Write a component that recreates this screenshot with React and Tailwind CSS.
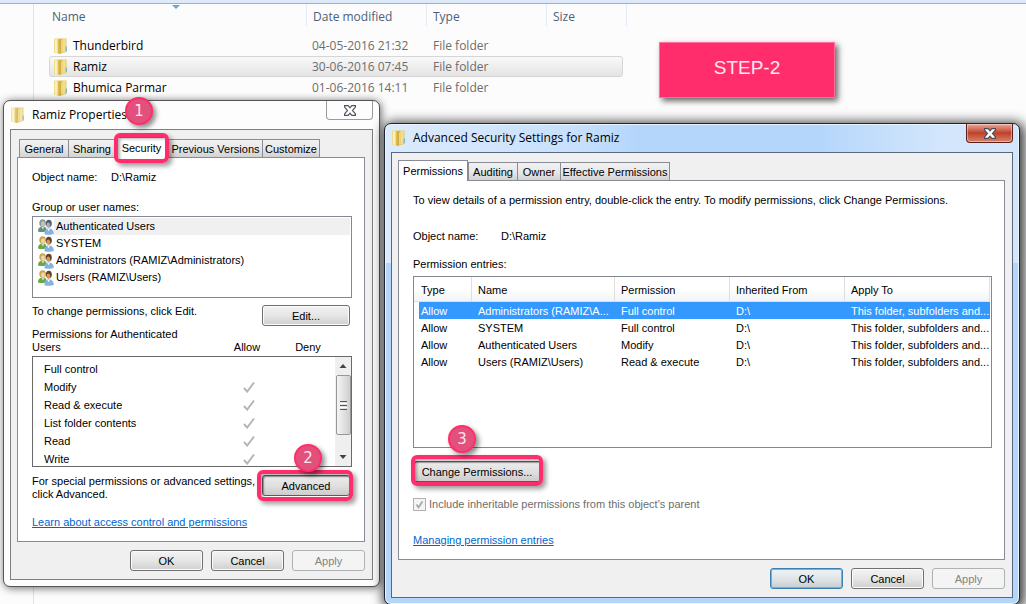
import { useState } from "react";

const GLASS_TEXT = "font-['Open_Sans','Noto_Sans',sans-serif]";

function Folder({ faded = false }) {
  return (
    <svg viewBox="0 0 16 18" className={faded ? "h-[18px] w-4 shrink-0 opacity-80" : "h-[18px] w-4 shrink-0"} aria-hidden="true">
      <path d="M7 1.500h6.500V15L8 16.500z" fill="#e2c65f" />
      <path d="M9.500 2h3.200v12.600l-3.200 1z" fill="#f1de8e" />
      <path d="M1 1.800 7 1v16l-6-1.200z" fill="#f2dd8c" />
      <path d="M2 2.600l2-.3v13.800l-2-.5z" fill="#faf0bd" />
      <path d="M5 2h2.500v15L5 16.400z" fill="#dcbd52" />
      <path d="M6.600 3l2.200-.8v13.600L6.600 17z" fill="#c9a33a" />
      <path d="M7.800 3.500l1.400-.5v12.500l-1.400.6z" fill="#eed77c" />
      <path d="M12.700 9.500h1v4.600l-1 .5z" fill="#5aa9cf" />
    </svg>
  );
}

function People({ muted = false }) {
  const hair = muted ? "#8d9a90" : "#c9a552";
  const face = muted ? "#c9c4bb" : "#f2d3a4";
  const body = muted ? "#5f9377" : "#6aa845";
  return (
    <svg viewBox="0 0 16 16" className="h-4 w-4 shrink-0" aria-hidden="true">
      <path d="M0 12.500C0 9 2 7.600 4.600 7.600S8.800 9 8.800 12c-2 1.400-6.600 1.400-8.800.5z" fill={body} />
      <ellipse cx="4.600" cy="4" rx="3.300" ry="3.800" fill={hair} />
      <ellipse cx="5" cy="5" rx="2" ry="2.700" fill={face} />
      <path d="M3.500 8.300l1.500 2 1.200-2z" fill="#eef4e8" />
      <ellipse cx="10.800" cy="4.600" rx="3" ry="3.800" fill={muted ? "#4f5f70" : "#5b4228"} />
      <ellipse cx="10.300" cy="6.200" rx="1.900" ry="2.700" fill={muted ? "#a9acb0" : "#d49a5d"} />
      <path d="M6.500 15.200c-.2-4 1.600-6 4.300-6s5 2.200 5.100 5.600c-2.600 1.300-6.600 1.400-9.400.4z" fill="#86b1e2" />
      <path d="M9 9.500l1.600 2.700 1.600-2.700z" fill="#f3f8ff" />
    </svg>
  );
}

function CloseGlyph({ fill, stroke }) {
  return (
    <svg viewBox="0 0 12 11" className="h-[11px] w-3" aria-hidden="true">
      <path d="M.6.600h3.600L6 2.900 7.800.6h3.600v1.500L8.500 5.500l2.900 3.400v1.500H7.800L6 8.100l-1.800 2.300H.6V8.900l2.900-3.400L.6 2.100z" fill={fill} stroke={stroke} strokeWidth="1.200" />
    </svg>
  );
}

function Check() {
  return (
    <svg viewBox="0 0 12 12" className="h-3 w-3" role="img" aria-label="Allowed">
      <path d="M1 7l3.200 3.600L11 1.500" fill="none" stroke="#b4b4b4" strokeWidth="1.900" />
    </svg>
  );
}

function Button({ children, size = "w-[73px]", kind = "normal", ...rest }) {
  const looks = {
    normal: "border-[#707070] bg-linear-to-b from-[#f3f3f3] via-[#e6e6e6] to-[#cfcfcf] text-black shadow-[inset_0_0_0_1px_#fbfbfb]",
    primary: "border-[#3c7fb1] bg-linear-to-b from-[#eef3f5] via-[#e0e6e8] to-[#c6ced2] text-black shadow-[inset_0_0_0_1px_#48c4f0]",
    pressed: "border-[#5c5c5c] bg-linear-to-b from-[#ececec] via-[#e0e0e0] to-[#cccccc] text-black shadow-[inset_1px_1px_1px_#a0a0a0]",
    disabled: "border-[#adb2b5] bg-[#f4f4f4] text-[#838383]",
  };
  return (
    <button type="button" disabled={kind === "disabled"} className={`${size} ${looks[kind]} h-[21px] shrink-0 rounded-[3px] border text-center leading-[18px]`} {...rest}>
      {children}
    </button>
  );
}

function Badge({ children, place }) {
  return (
    <span className={`${place} absolute z-20 flex size-7 items-center justify-center rounded-full border-2 border-[#ff2d6b] bg-[#e2507c] font-['DejaVu_Sans',sans-serif] text-[15px] text-[#ffe3ec] shadow-[3px_3px_5px_rgba(0,0,0,.45)]`}>
      {children}
    </span>
  );
}

function Highlight({ place }) {
  return <span aria-hidden="true" className={`${place} pointer-events-none absolute z-10 rounded-md border-4 border-[#ff2d6b] shadow-[3px_3px_5px_rgba(0,0,0,.4),inset_2px_2px_3px_rgba(0,0,0,.3)]`} />;
}

function Tab({ children, size }) {
  return (
    <button type="button" role="tab" aria-selected="false" className={`${size} h-[18px] border border-r-0 border-b-0 border-[#898c95] bg-linear-to-b from-[#f2f2f2] via-[#e8e8e8] to-[#d2d2d2] text-center leading-[18px] whitespace-nowrap last:border-r`}>
      {children}
    </button>
  );
}

const FILES = [
  ["Thunderbird", "04-05-2016 21:32"],
  ["Ramiz", "30-06-2016 07:45"],
  ["Bhumica Parmar", "01-06-2016 14:11"],
];

function Explorer() {
  return (
    <main className={`${GLASS_TEXT} flex min-h-screen flex-col bg-[#fcfcfc] text-xs`}>
      <div className="h-1 border-b border-[#a0afc8] bg-[#dce9f8]" />
      <div className="flex flex-1">
        <div className="w-[34px] shrink-0 border-r border-[#d9e5f3]" />
        <div className="pl-[15px]">
          <table className="w-[578px] table-fixed border-separate border-spacing-0 text-left">
            <colgroup>
              <col className="w-[258px]" />
              <col className="w-[120px]" />
              <col className="w-[120px]" />
              <col className="w-[80px]" />
            </colgroup>
            <thead className="text-[#4c607a]">
              <tr className="h-[21px] leading-[18px]">
                <th scope="col" className="relative border-r border-[#e3ecf6] pt-1 pl-[3px] font-normal">
                  Name
                  <svg viewBox="0 0 8 4" className="absolute top-px left-[123px] h-1 w-2" aria-hidden="true">
                    <path d="M0 0h8L4 4z" fill="#6ba9cb" />
                  </svg>
                </th>
                <th scope="col" className="border-r border-[#e3ecf6] pt-1 pl-[6px] font-normal">Date modified</th>
                <th scope="col" className="border-r border-[#e3ecf6] pt-1 pl-[6px] font-normal">Type</th>
                <th scope="col" className="border-r border-[#e3ecf6] pt-1 pl-[6px] font-normal">Size</th>
              </tr>
            </thead>
          </table>
          <ul className="mt-[9px]">
            {FILES.map(([name, date]) => (
              <li
                key={name}
                className={
                  name === "Ramiz"
                    ? "flex h-[21px] w-[574px] items-center rounded-[3px] border border-[#d6d6d6] bg-linear-to-b from-[#f9f9f9] to-[#e4e4e4]"
                    : "flex h-[21px] w-[574px] items-center border border-transparent"
                }
              >
                <span className="flex w-[262px] items-center gap-[4px] pl-[3px]"><Folder />{name}</span>
                <span className="w-[121px] text-[#6d6d6d]">{date}</span>
                <span className="text-[#6d6d6d]">File folder</span>
              </li>
            ))}
          </ul>
        </div>
      </div>
    </main>
  );
}

const USERS = ["Authenticated Users", "SYSTEM", "Administrators (RAMIZ\\Administrators)", "Users (RAMIZ\\Users)"];
const RIGHTS = ["Full control", "Modify", "Read & execute", "List folder contents", "Read", "Write"];

function PropertiesWindow() {
  return (
    <section aria-label="Ramiz Properties" className="absolute top-[100px] left-[3px] w-[377px] rounded-[7px] border border-[#555] bg-[#fdfdfd] px-1.5 pb-1.5 shadow-[1px_1px_8px_rgba(0,0,0,.6)]">
      <header className={`${GLASS_TEXT} flex h-7 items-start justify-between text-xs`}>
        <h2 className="flex h-7 items-center gap-[6px]"><Folder faded />Ramiz Properties</h2>
        <button type="button" aria-label="Close" className="flex h-[19px] w-[47px] items-center justify-center rounded-b-[4px] border border-t-0 border-[#9b9b9b]">
          <CloseGlyph fill="#fff" stroke="#4f5566" />
        </button>
      </header>
      <Badge place="top-[-4px] left-[121px]">1</Badge>
      <div className="border border-[#7f7f7f] bg-[#f0f0f0] pt-[9px] pr-[7px] pb-2 pl-1.5">
        <div role="tablist" className="flex h-[18px] pl-0.5">
          <Tab size="w-[49px]">General</Tab>
          <Tab size="w-[47px]">Sharing</Tab>
          <div className="relative w-[53px]">
            <button type="button" role="tab" aria-selected="true" className="absolute -top-0.5 h-[21px] w-full border border-b-0 border-[#898c95] bg-white leading-[18px]">Security</button>
            <Highlight place="-top-1.5 -left-px h-[30px] w-[55px]" />
          </div>
          <Tab size="w-[94px]">Previous Versions</Tab>
          <Tab size="w-[58px]">Customize</Tab>
        </div>
        <div className="border border-[#898c95] bg-white px-[14px] pt-3 pb-3 pr-3">
          <p className="flex"><span className="w-[79px]">Object name:</span><span>D:\Ramiz</span></p>
          <p className="mt-4">Group or user names:</p>
          <ul className="mt-0.5 h-[82px] border border-[#828790] pt-px pr-px pl-[5px]">
            {USERS.map((user, i) => (
              <li key={user} className="flex h-[17px] items-center">
                <People muted={i === 0} />
                <span className={i === 0 ? "flex-1 bg-[#f0f0f0] pl-0.5 leading-[17px]" : "flex-1 pl-0.5 leading-[17px]"}>{user}</span>
              </li>
            ))}
          </ul>
          <div className="mt-[7px] flex items-start justify-between pr-0.5 leading-[13px]">
            <p>To change permissions, click Edit.</p>
            <Button size="w-[88px]">Edit...</Button>
          </div>
          <div className="mt-0.5 flex items-end leading-[13px]">
            <p className="w-[186px] pr-8">Permissions for Authenticated Users</p>
            <span className="w-[58px] text-center">Allow</span>
            <span className="w-16 text-center">Deny</span>
          </div>
          <div className="mt-0.5 flex h-[111px] overflow-hidden border border-[#696969]">
            <ul className="flex-1 pt-[3px] pl-[11px]">
              {RIGHTS.map((right, i) => (
                <li key={right} className="flex h-[18px] items-center">
                  <span className="w-[199px]">{right}</span>
                  {i > 0 && <Check />}
                </li>
              ))}
            </ul>
            <div className="flex w-4 flex-col items-center bg-[#efefef]">
              <svg viewBox="0 0 16 18" className="h-[18px] w-4" aria-hidden="true"><path d="M4.500 11h7L8 7z" fill="#444" /></svg>
              <div className="flex h-[60px] w-[15px] flex-col items-center justify-center gap-px rounded-[2px] border border-[#979797] bg-linear-to-r from-[#f5f5f5] to-[#cfcfcf]">
                <span className="h-px w-[7px] bg-[#555]" />
                <span className="h-px w-[7px] bg-white" />
                <span className="h-px w-[7px] bg-[#555]" />
                <span className="h-px w-[7px] bg-white" />
                <span className="h-px w-[7px] bg-[#555]" />
              </div>
              <svg viewBox="0 0 16 18" className="mt-auto h-[18px] w-4" aria-hidden="true"><path d="M4.500 7h7L8 11z" fill="#444" /></svg>
            </div>
          </div>
          <div className="mt-2 flex items-start justify-between pr-0.5 leading-[13px]">
            <p>For special permissions or advanced settings,<br />click Advanced.</p>
            <div className="relative">
              <Button size="w-[88px]" kind="pressed">Advanced</Button>
              <Highlight place="-top-[5px] -left-[5px] h-[31px] w-[96px]" />
              <Badge place="-top-[31px] left-8">2</Badge>
            </div>
          </div>
          <p className="mt-[14px]"><a href="#access-control" className="text-[#0066cc] underline">Learn about access control and permissions</a></p>
        </div>
        <div className="mt-2 flex justify-end gap-2">
          <Button>OK</Button>
          <Button>Cancel</Button>
          <Button kind="disabled">Apply</Button>
        </div>
      </div>
    </section>
  );
}

const ENTRIES = [
  ["Administrators (RAMIZ\\A...", "Full control"],
  ["SYSTEM", "Full control"],
  ["Authenticated Users", "Modify"],
  ["Users (RAMIZ\\Users)", "Read & execute"],
];

function SecurityWindow() {
  const [selected, setSelected] = useState(0);
  return (
    <section aria-label="Advanced Security Settings" className="absolute top-[123px] right-1.5 left-[384px] rounded-[7px] border border-[#1c2530] bg-[#b4d6fb] bg-[linear-gradient(to_right,#dcebfc,#c8e0fc_30%,#b4d6fb_40%,#b4d6fb_68%,#d3e6fc_88%)] bg-[length:100%_139px] bg-no-repeat px-1.5 pb-1.5 shadow-[inset_0_0_0_1px_#e8f5ff,2px_2px_12px_3px_rgba(0,0,0,.75)]">
      <header className={`${GLASS_TEXT} flex h-7 items-start justify-between text-xs`}>
        <h2 className="flex h-7 items-center gap-[6px]"><Folder />Advanced Security Settings for Ramiz</h2>
        <button type="button" aria-label="Close" className="flex h-[19px] w-[47px] items-center justify-center rounded-b-[4px] border border-t-0 border-[#5a2020] bg-linear-to-b from-[#e9a89b] from-0% via-[#bd4029] via-50% to-[#d98367] shadow-[inset_0_0_0_1px_rgba(255,255,255,.4)]">
          <CloseGlyph fill="#fff" stroke="#4b4d5c" />
        </button>
      </header>
      <div className="border border-[#58687c] bg-[#f0f0f0] pt-[7px] pr-[7px] pb-2 pl-1.5">
        <div role="tablist" className="flex h-5 items-end">
          <button type="button" role="tab" aria-selected="true" className="relative -mb-px h-[21px] w-[70px] border border-b-0 border-[#898c95] bg-white pb-px leading-[18px]">Permissions</button>
          <Tab size="w-[49px]">Auditing</Tab>
          <Tab size="w-[43px]">Owner</Tab>
          <Tab size="w-[110px]">Effective Permissions</Tab>
        </div>
        <div className="border border-[#898c95] bg-white pt-3 pr-3 pb-3 pl-[14px]">
          <p>To view details of a permission entry, double-click the entry. To modify permissions, click Change Permissions.</p>
          <p className="mt-[22px] flex"><span className="w-22">Object name:</span><span>D:\Ramiz</span></p>
          <p className="mt-[14px]">Permission entries:</p>
          <div className="mt-[5px] h-[172px] border border-[#828790] pr-px">
            <table className="w-full table-fixed border-separate border-spacing-0 text-left whitespace-nowrap">
              <colgroup>
                <col className="w-[58px]" />
                <col className="w-[143px]" />
                <col className="w-[115px]" />
                <col className="w-[115px]" />
                <col />
              </colgroup>
              <thead>
                <tr className="h-[25px]">
                  {["Type", "Name", "Permission", "Inherited From", "Apply To"].map((h) => (
                    <th key={h} scope="col" className="border-r border-b border-[#dfdfdf] bg-linear-to-b from-white from-50% to-[#f3f4f5] pt-px pl-1.5 font-normal first:pl-[7px]">{h}</th>
                  ))}
                </tr>
              </thead>
              <tbody>
                {ENTRIES.map(([name, permission], i) => (
                  <tr key={name} onClick={() => setSelected(i)} className={i === selected ? "h-[17px] text-white [&>td]:bg-[#3399ff]" : "h-[17px]"}>
                    <td className="border-l-[5px] border-white bg-clip-padding pl-0.5">Allow</td>
                    <td className="pl-1.5">{name}</td>
                    <td className="pl-1.5">{permission}</td>
                    <td className="pl-1.5">D:\</td>
                    <td className="pl-1.5">This folder, subfolders and...</td>
                  </tr>
                ))}
              </tbody>
            </table>
          </div>
          <div className="relative mt-[13px] w-32">
            <Button size="w-32" kind="pressed">Change Permissions...</Button>
            <Highlight place="-top-1.5 -left-0.5 h-[31px] w-[132px]" />
            <Badge place="-top-9 left-[35px]">3</Badge>
          </div>
          <label className="mt-[15px] flex items-center gap-[3px] text-[#6d6d6d]">
            <span className="relative flex size-[13px]">
              <input type="checkbox" defaultChecked disabled className="size-[13px] appearance-none border border-[#b1b1b1] bg-[#f4f4f4]" />
              <svg viewBox="0 0 13 13" className="pointer-events-none absolute size-[13px]" aria-hidden="true"><path d="M3.500 6.500l2 3 4-6" fill="none" stroke="#a9a9a9" strokeWidth="1.800" /></svg>
            </span>
            Include inheritable permissions from this object's parent
          </label>
          <p className="mt-[22px]"><a href="#permission-entries" className="text-[#0066cc] underline">Managing permission entries</a></p>
        </div>
        <div className="mt-2 flex justify-end gap-2">
          <Button kind="primary">OK</Button>
          <Button>Cancel</Button>
          <Button kind="disabled">Apply</Button>
        </div>
      </div>
    </section>
  );
}

export default function App() {
  return (
    <div className="relative min-h-screen overflow-hidden font-['Liberation_Sans',Arial,sans-serif] text-[11px] leading-[14px] text-black">
      <Explorer />
      <div className="absolute top-[42px] left-[659px] flex h-14 w-44 items-center justify-center border border-[#ff6f9b] bg-[#ff2d6b] pb-1 text-[19px] text-[#ffe8ef] shadow-[3px_3px_6px_rgba(0,0,0,.6)]">STEP-2</div>
      <PropertiesWindow />
      <SecurityWindow />
    </div>
  );
}
